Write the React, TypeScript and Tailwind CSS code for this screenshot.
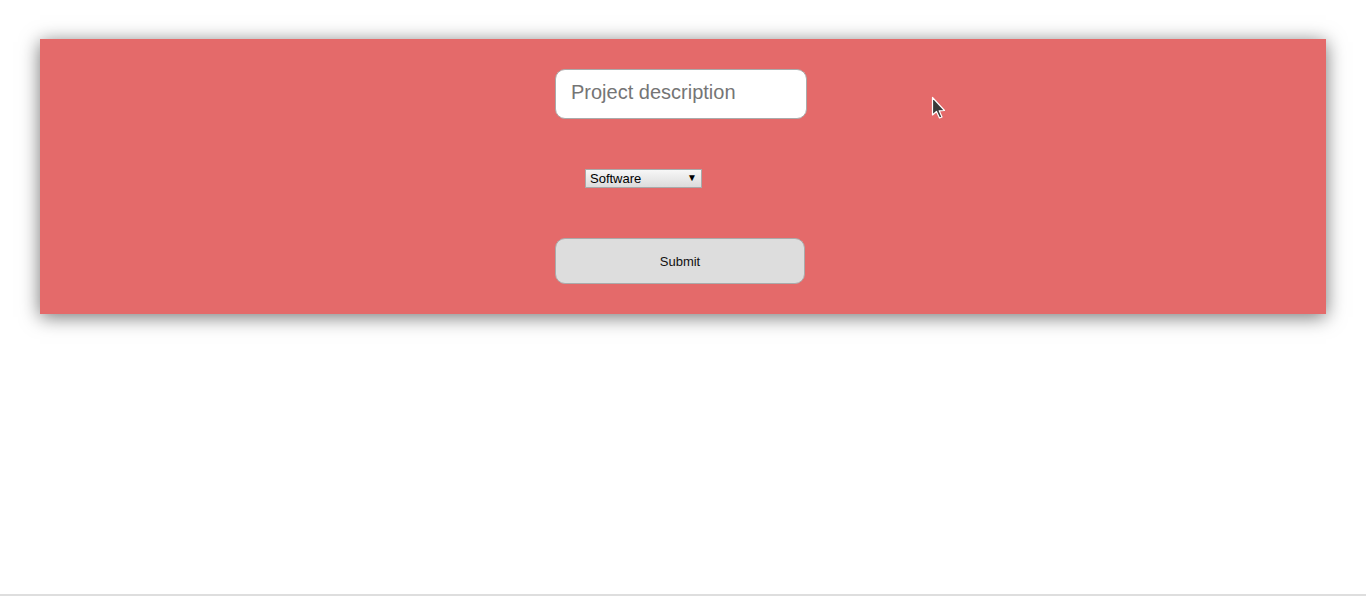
import React from "react";

export default function App() {
  return (
    <div
      className="relative h-[596px] w-full bg-white border-b-2 border-[#dedede] overflow-hidden"
      style={{ fontFamily: '"Liberation Sans", Arial, sans-serif' }}
    >
      <div className="px-[40px] pt-[39px]">
        <div className="h-[275px] bg-[#e46a6a] shadow-[0_3px_18px_rgba(0,0,0,0.55)] flex flex-col items-start pl-[515px] pt-[30px]">
          <input
            type="text"
            placeholder="Project description"
            className="w-[252px] h-[50px] rounded-[10px] border border-[#aaaaaa] bg-white pl-[15px] pb-[4px] text-[20px] text-[#333] placeholder:text-[#757575] outline-none"
          />
          <div className="relative mt-[50px] ml-[30px] w-[117px] h-[19px] border border-[#a9a9a9] bg-gradient-to-b from-[#f7f7f7] to-[#dcdcdc] text-[13px] text-black leading-[17px] pl-[4px]">
            Software
            <span className="absolute right-[4px] top-[-1px] text-[10px] leading-[17px]">▼</span>
          </div>
          <button className="mt-[50px] w-[250px] h-[46px] rounded-[10px] border border-[#aaaaaa] bg-[#dddddd] pt-[2px] text-[13px] text-[#111]">
            Submit
          </button>
        </div>
      </div>
      <svg
        className="absolute left-[931px] top-[96px]"
        width="16"
        height="24"
        viewBox="0 0 16 24"
      >
        <path
          d="M1.5 1.5 L1.5 19 L5.5 15.5 L8.5 22 L11 21 L8.2 14.8 L13.5 14.5 Z"
          fill="#3a3a3a"
          stroke="#ffffff"
          strokeWidth="1.2"
          strokeLinejoin="round"
        />
      </svg>
    </div>
  );
}
